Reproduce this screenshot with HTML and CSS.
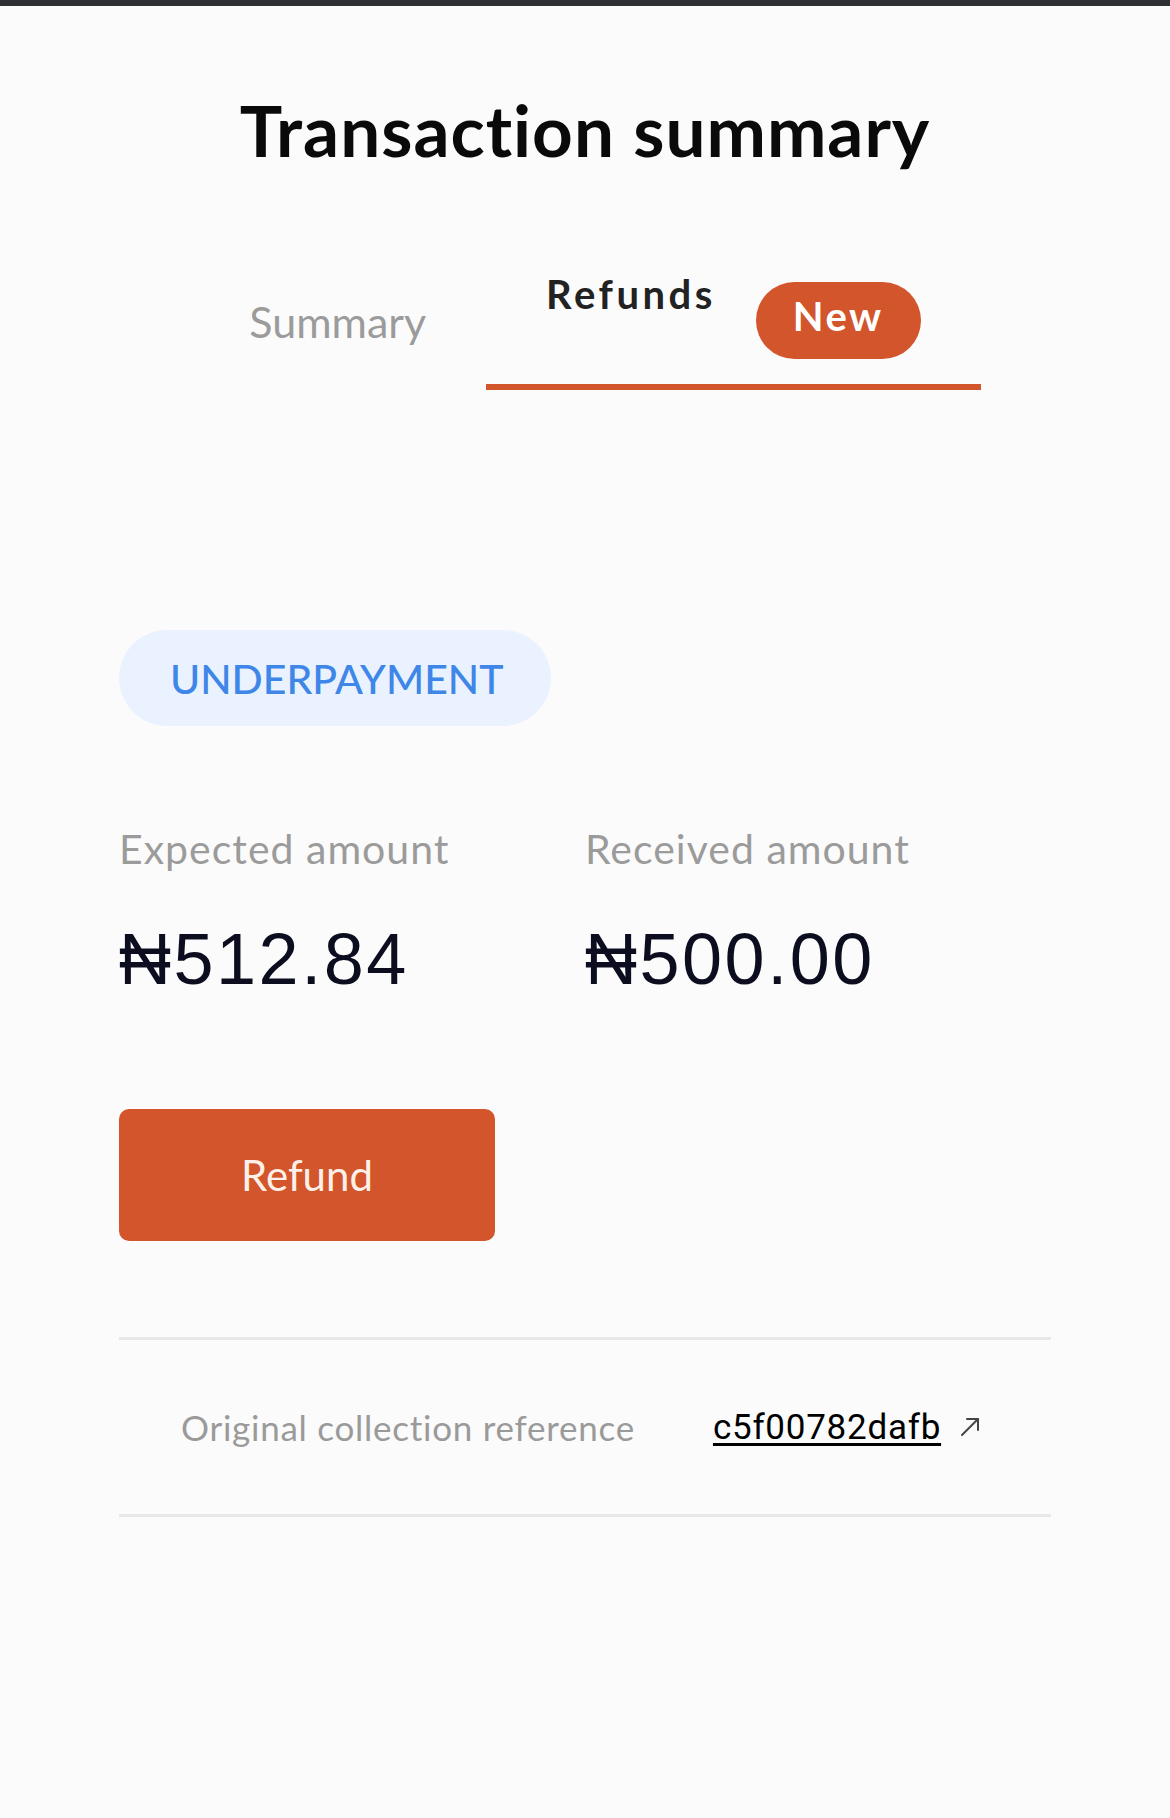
FILE: index.html
```html
<!DOCTYPE html>
<html lang="en">
<head>
  <meta charset="UTF-8">
  <meta name="viewport" content="width=device-width, initial-scale=1.0">
  <title>Transaction summary</title>
  <link rel="stylesheet" href="styles.css">
</head>
<body>
  <div class="topbar"></div>

  <main class="page">
    <h1 class="title">Transaction summary</h1>

    <nav class="tabs">
      <div class="tab">
        <span class="tab-label">Summary</span>
      </div>
      <div class="tab active">
        <span class="tab-label">Refunds</span>
        <span class="badge">New</span>
      </div>
    </nav>

    <div class="status">UNDERPAYMENT</div>

    <div class="amounts">
      <div class="amount">
        <div class="amount-label">Expected amount</div>
        <div class="amount-value">&#8358;512.84</div>
      </div>
      <div class="amount">
        <div class="amount-label">Received amount</div>
        <div class="amount-value">&#8358;500.00</div>
      </div>
    </div>

    <button class="refund-btn" type="button">Refund</button>

    <div class="ref-row">
      <span class="ref-label">Original collection reference</span>
      <a class="ref-link" href="#">c5f00782dafb</a>
      <svg class="ref-icon" width="20" height="20" viewBox="0 0 20 20" fill="none" stroke="#444" stroke-width="2" stroke-linecap="round" stroke-linejoin="round">
        <path d="M2 18 L18 2"/>
        <path d="M7 2 H18 V13"/>
      </svg>
    </div>
  </main>
</body>
</html>
```

FILE: styles.css
```css
* {
  margin: 0;
  padding: 0;
  box-sizing: border-box;
}

body {
  background: #fbfbfb;
  font-family: 'Lato', 'Noto Sans', sans-serif;
  font-variant-ligatures: none;
  color: #111;
}

.topbar {
  height: 6px;
  background: #2f3034;
}

.page {
  padding: 0 119px;
}

.title {
  margin-top: 88px;
  font-size: 71px;
  line-height: 1;
  font-weight: 700;
  letter-spacing: 1px;
  text-align: center;
  color: #0a0a0a;
}

/* tabs */
.tabs {
  display: flex;
  justify-content: center;
  margin-top: 105px;
}

.tab {
  display: flex;
  align-items: flex-start;
  height: 120px;
  padding: 0 60px;
  border-bottom: 6px solid transparent;
}

.tab .tab-label {
  margin-top: 30px;
  font-size: 43px;
  line-height: 1;
  color: #9b9b9b;
}

.tab.active {
  border-bottom-color: #d2552b;
}

.tab.active .tab-label {
  margin-top: 4px;
  font-size: 40px;
  font-weight: 700;
  letter-spacing: 3.5px;
  color: #222;
}

.badge {
  display: flex;
  align-items: center;
  height: 77px;
  margin-top: 12px;
  margin-left: 40px;
  padding: 0 37px 10px;
  border-radius: 40px;
  background: #d2552b;
  color: #fff;
  font-size: 40px;
  line-height: 1;
  font-weight: 700;
  letter-spacing: 2.5px;
}

/* status pill */
.status {
  display: flex;
  align-items: center;
  width: fit-content;
  height: 96px;
  margin-top: 240px;
  padding: 0 47px 0 51px;
  border-radius: 48px;
  background: #e9f2fe;
  color: #3e86e8;
  font-size: 41px;
  line-height: 1;
  font-weight: 500;
}

/* amounts */
.amounts {
  display: grid;
  grid-template-columns: 1fr 1fr;
  margin-top: 102px;
}

.amount-label {
  font-size: 41px;
  line-height: 1;
  letter-spacing: 1px;
  color: #9b9b9b;
}

.amount-value {
  margin-top: 54px;
  font-family: 'Liberation Sans', 'DejaVu Sans', sans-serif;
  font-size: 72px;
  line-height: 1;
  letter-spacing: 2.5px;
  color: #0c0e1f;
}

.refund-btn {
  display: block;
  width: 376px;
  height: 132px;
  margin-top: 114px;
  border: none;
  border-radius: 10px;
  background: #d2552b;
  color: #fdf0e8;
  font-family: 'Lato', 'Noto Sans', sans-serif;
  font-size: 42px;
  cursor: pointer;
}

/* reference row */
.ref-row {
  display: flex;
  align-items: center;
  height: 180px;
  margin-top: 96px;
  padding-left: 62px;
  border-top: 3px solid #e8e8ea;
  border-bottom: 3px solid #e8e8ea;
}

.ref-label {
  font-size: 35px;
  letter-spacing: 0.75px;
  color: #9a9a9a;
}

.ref-link {
  margin-left: 78px;
  font-family: 'Roboto', 'Liberation Sans', sans-serif;
  font-size: 35px;
  letter-spacing: 0.75px;
  color: #000;
  text-decoration-thickness: 3px;
  text-underline-offset: 4px;
}

.ref-icon {
  margin-left: 19px;
}
```
